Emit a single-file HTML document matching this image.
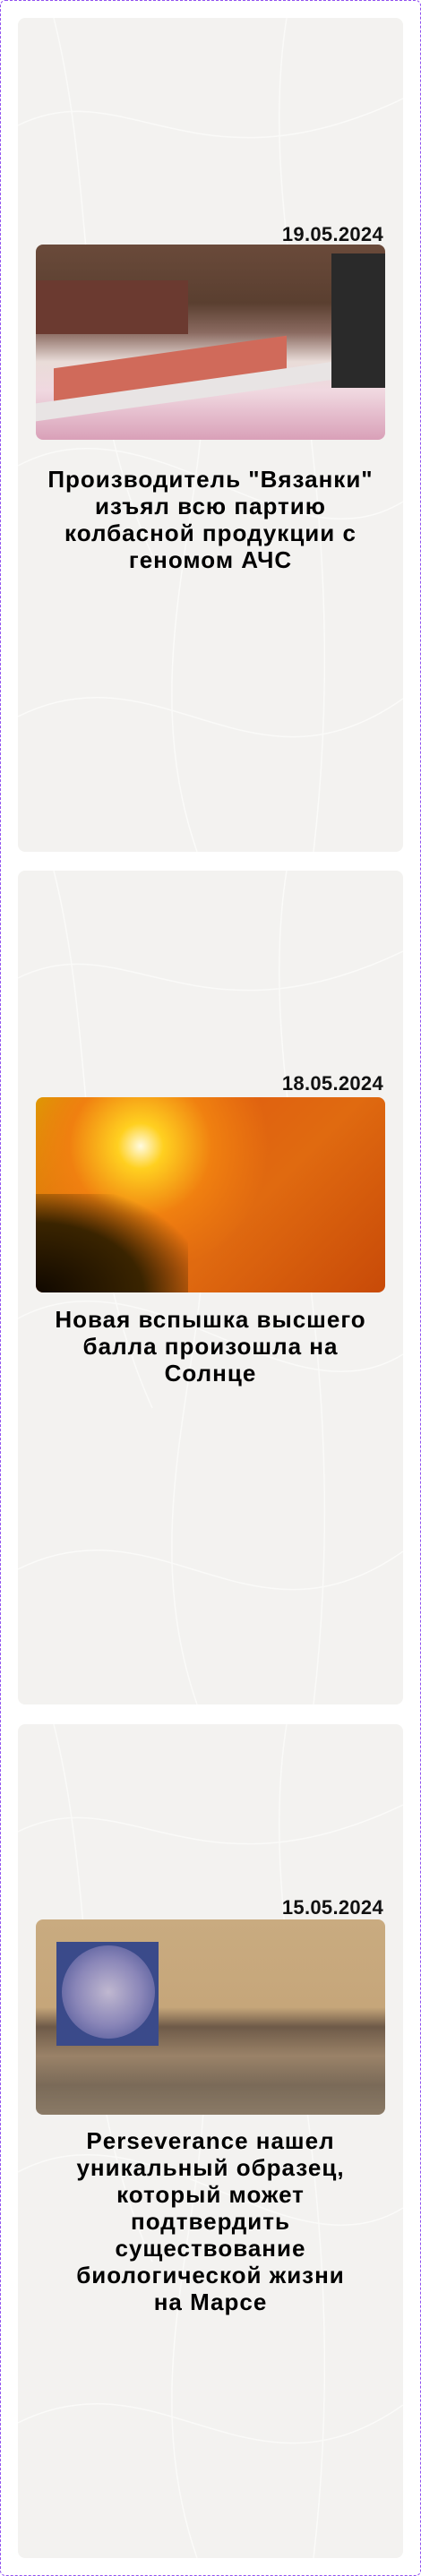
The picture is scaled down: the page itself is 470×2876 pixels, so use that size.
<!DOCTYPE html>
<html><head><meta charset="utf-8"><style>
html,body{margin:0;padding:0;width:470px;height:2876px;background:#fff;overflow:hidden}
.frame{position:absolute;left:0;top:0;width:468px;height:2874px;border:1px dashed #9050f0;border-radius:6px}
.card{position:absolute;left:20px;width:430px;height:931px;border-radius:8px;overflow:hidden;background:#f3f2f0;}
.tex{position:absolute;inset:0}
.date{position:absolute;right:22px;font:bold 22px/24px "Liberation Sans",sans-serif;color:#111;letter-spacing:0.3px}
.img{position:absolute;left:20px;width:390px;height:218px;border-radius:8px;overflow:hidden}
.title{position:absolute;left:0;width:430px;text-align:center;white-space:nowrap;font:bold 26px/30px "Liberation Sans","Noto Sans CJK SC",sans-serif;color:#000;letter-spacing:1px}
</style></head><body>
<div class="frame"></div>

<svg width="0" height="0" style="position:absolute"><defs>
<g id="tx" stroke="#fcfcfb" stroke-width="1.5" fill="none" opacity="0.8">
<path d="M0 120 C120 60 200 200 430 90"/><path d="M40 0 C90 200 60 400 150 600"/><path d="M300 0 C260 250 380 500 330 931"/>
<path d="M0 500 C150 420 300 620 430 540"/><path d="M0 780 C160 700 260 880 430 760"/><path d="M200 300 C240 500 120 700 200 931"/>
</g></defs></svg>

<div class="card" style="top:20px">
<svg class="tex" width="430" height="931"><use href="#tx"/></svg>
<div class="date" style="top:230px">19.05.2024</div>
<div class="img" style="top:253px;background:linear-gradient(180deg,#6a4a3a 0%,#5a3f30 30%,#8a6a60 45%,#e9dcd8 60%,#f0d8e0 75%,#d9a0b8 100%)">
<div style="position:absolute;left:0;top:40px;width:170px;height:60px;background:#6b3a30"></div>
<div style="position:absolute;left:20px;top:120px;width:260px;height:40px;background:#d06a5a;transform:skewY(-8deg)"></div>
<div style="position:absolute;left:0;top:150px;width:390px;height:20px;background:#e8e4e4;transform:skewY(-8deg)"></div>
<div style="position:absolute;left:330px;top:10px;width:60px;height:150px;background:#2a2a2a"></div>
</div>
<div class="title" style="top:500px">Производитель "Вязанки"<br>изъял всю партию<br>колбасной продукции с<br>геномом АЧС</div>
</div>

<div class="card" style="top:972px">
<svg class="tex" width="430" height="931"><use href="#tx"/></svg>
<div class="date" style="top:226px">18.05.2024</div>
<div class="img" style="top:253px;background:radial-gradient(circle at 30% 25%,#fffbe0 0%,#ffd020 8%,#f08010 25%,transparent 45%),linear-gradient(135deg,#d8a000 0%,#e06010 35%,#e06a10 60%,#c84a08 100%)">
<div style="position:absolute;left:0;bottom:0;width:170px;height:110px;background:radial-gradient(ellipse at 0% 100%,#100800 0%,#3a2400 50%,transparent 80%)"></div>
</div>
<div class="title" style="top:486px">Новая вспышка высшего<br>балла произошла на<br>Солнце</div>
</div>

<div class="card" style="top:1925px">
<svg class="tex" width="430" height="931"><use href="#tx"/></svg>
<div class="date" style="top:193px">15.05.2024</div>
<div class="img" style="top:218px;background:linear-gradient(180deg,#c9ab80 0%,#c6a67a 45%,#6e5a48 55%,#9a8268 70%,#7a6a58 85%,#8a7a66 100%)">
<div style="position:absolute;left:23px;top:25px;width:114px;height:116px;background:#3a4a8a">
<div style="position:absolute;left:6px;top:4px;width:104px;height:104px;border-radius:50%;background:radial-gradient(circle,#c0b8d0 0%,#8a86b8 50%,#404a90 100%)"></div></div>
</div>
<div class="title" style="top:450px">Perseverance нашел<br>уникальный образец,<br>который может<br>подтвердить<br>существование<br>биологической жизни<br>на Марсе</div>
</div>
</body></html>
